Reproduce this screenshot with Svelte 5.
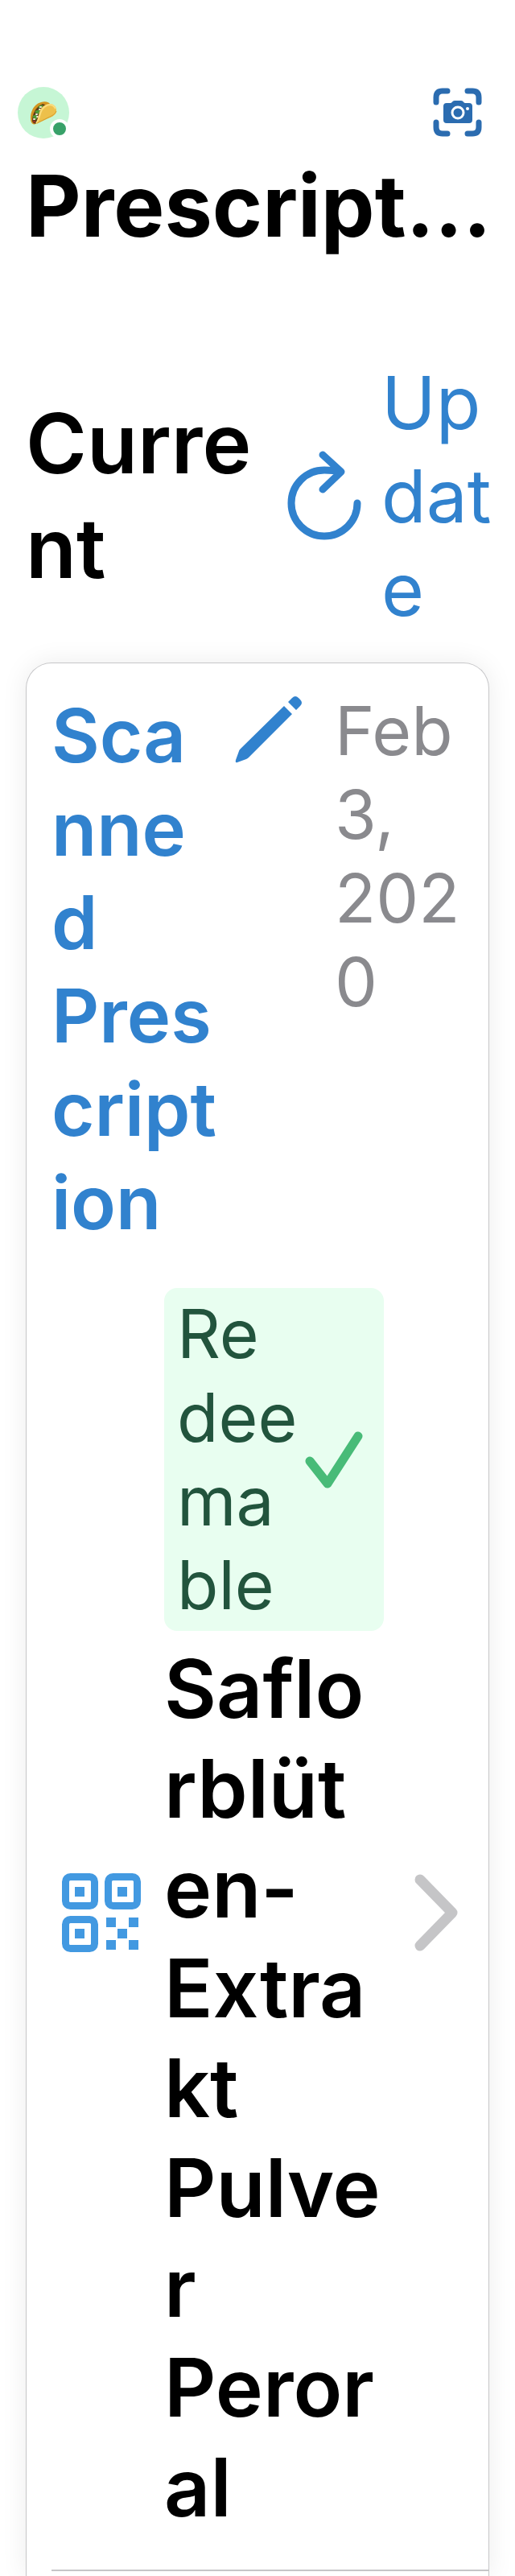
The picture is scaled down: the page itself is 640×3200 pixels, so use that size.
<script>
  const prescription = {
    name: 'Scanned Prescription',
    date: 'Feb 3, 2020',
    medicine: 'Saflorblüten-Extrakt Pulver Peroral',
  };
</script>

<main class="page">
  <header class="top">
    <div class="toolbar">
      <button class="avatar" aria-label="Profile">
        <svg width="36" height="32" viewBox="0 0 36 32" aria-hidden="true">
          <path d="M3 28C0 20 4 6 15 3c5-1.500 9-.5 11 2L12 26c-3 5-7 6-9 2Z" fill="#d3931f" />
          <path d="M4 26C4 18 8 9 17 5l5 2-11 20c-3 4-6 3-7-1Z" fill="#5b3a1b" />
          <path d="m6 21 3-1m0-5 3-1m1-5 3-1m-8 15 2-1m1-6 2-1" stroke="#4f9a35" stroke-width="3" stroke-linecap="round" />
          <path d="M6 24h1m2-6h1m3-6h1m-4 9h1m3-12h1" stroke="#f3e9d8" stroke-width="2" stroke-linecap="round" />
          <path d="M6 27h1m4-4h1" stroke="#a5301f" stroke-width="2" stroke-linecap="round" />
          <path d="M9 29C13 23 10 11 21 6c8-3 14 2 13 9-1 4-5 6-10 8L9 30Z" fill="#edc04b" />
          <path d="M9 29C15 22 12 12 22 7c5-2 9 0 11 4" fill="none" stroke="#f9dc7d" stroke-width="2" />
          <path d="m10 29 14-7c5-2 9-5 10-8" fill="none" stroke="#d29a2c" stroke-width="1" />
        </svg>
        <span class="online"></span>
      </button>
      <button class="scan" aria-label="Scan prescription">
        <svg width="62" height="62" viewBox="0 0 62 62" aria-hidden="true">
          <path
            d="M4 18v-6q0-8 8-8h6M43 4h6q8 0 8 8v6M57 43v6q0 8-8 8h-6M18 57h-6q-8 0-8-8v-6"
            fill="none" stroke="#2b6cb0" stroke-width="7" stroke-linecap="round"
          />
          <path
            d="M16 19h6c2 0 2-3 5-3h8c3 0 3 3 5 3h5q4 0 4 4v17q0 4-4 4H17q-4 0-4-4V23q0-4 4-4Z"
            fill="#2b6cb0"
          />
          <circle cx="31" cy="31" r="7" fill="#2b6cb0" stroke="#fff" stroke-width="3" />
          <circle cx="43" cy="26" r="2" fill="#fff" />
        </svg>
      </button>
    </div>
    <h1>Prescriptions</h1>
  </header>

  <section class="current">
    <div class="section-head">
      <h2>Current</h2>
      <button class="update">
        <svg width="94" height="112" viewBox="0 0 94 112" aria-hidden="true">
          <path
            d="M88 65A41 41 0 1 1 47 24Q59 24 67 26M45 5l23 21-23 22"
            fill="none" stroke="#3182ce" stroke-width="9" stroke-linecap="round" stroke-linejoin="round"
          />
        </svg>
        <span>Up<wbr />dat<wbr />e</span>
      </button>
    </div>

    <article class="card">
      <div class="card-head">
        <h3>{prescription.name}</h3>
        <button class="edit" aria-label="Rename prescription">
          <svg width="84" height="84" viewBox="0 0 84 84" aria-hidden="true">
            <path
              d="M61 13 71 23 17 77q-1 1-3 2L3 83q-3 1-2-3L5 69q0-1 2-3ZM66 8l5-5q4-4 8 0l2 2q4 4 0 8l-5 5Z"
              fill="#3182ce"
            />
          </svg>
        </button>
        <time datetime="2020-02-03">{prescription.date}</time>
      </div>

      <a class="item" href="#medicine">
        <svg class="qr" width="98" height="98" viewBox="0 0 98 98" aria-hidden="true">
          <g fill="none" stroke="#4299e1" stroke-width="9">
            <rect x="4.500" y="4.500" width="36" height="36" rx="6" />
            <rect x="57.500" y="4.500" width="36" height="36" rx="6" />
            <rect x="4.500" y="57.500" width="36" height="36" rx="6" />
          </g>
          <path
            d="M16 17h12v12H16ZM69 17h12v12H69ZM16 69h12v12H16ZM55 55h12v12H55ZM83 55h12v12H83ZM69 69h12v12H69ZM55 83h12v12H55ZM83 83h12v12H83Z"
            fill="#4299e1"
          />
        </svg>
        <div class="details">
          <div class="badge">
            <span>Re<wbr />dee<wbr />ma<wbr />ble</span>
            <svg width="72" height="70" viewBox="0 0 72 70" aria-hidden="true">
              <path
                d="m6 37 22 28L66 6"
                fill="none" stroke="#48bb78" stroke-width="11" stroke-linecap="round" stroke-linejoin="round"
              />
            </svg>
          </div>
          <p>{prescription.medicine}</p>
        </div>
        <svg class="chevron" width="54" height="94" viewBox="0 0 54 94" aria-hidden="true">
          <path
            d="m7 6 40 41L7 88"
            fill="none" stroke="#c5c5c7" stroke-width="13" stroke-linecap="round" stroke-linejoin="round"
          />
        </svg>
      </a>
    </article>
  </section>
</main>

<style>
  :global(body) {
    margin: 0;
    background: #fff;
  }

  .page {
    display: flex;
    flex-direction: column;
    height: 100vh;
    overflow: hidden;
    box-sizing: border-box;
    padding-top: 108px;
    font-family: Inter, "Liberation Sans", sans-serif;
    color: #000;
  }

  h1, h2, h3, p {
    margin: 0;
  }

  button {
    padding: 0;
    border: 0;
    background: none;
    font: inherit;
    color: inherit;
    cursor: pointer;
  }

  svg {
    display: block;
    flex: none;
    overflow: visible;
  }

  .toolbar {
    display: flex;
    justify-content: space-between;
    align-items: center;
    padding: 0 40px 0 22px;
  }

  .avatar {
    position: relative;
    display: grid;
    place-items: center;
    width: 64px;
    height: 64px;
    border-radius: 50%;
    background: #c6f6d5;
  }

  .online {
    position: absolute;
    right: 0;
    bottom: 0;
    width: 16px;
    height: 16px;
    border: 4px solid #fff;
    border-radius: 50%;
    background: #38a169;
  }

  h1 {
    padding: 0 16px 0 32px;
    font-size: 106px;
    line-height: 168px;
    font-weight: 700;
    white-space: nowrap;
    overflow: hidden;
    text-overflow: ellipsis;
  }

  .current {
    display: flex;
    flex: 1;
    flex-direction: column;
    padding: 102px 32px 0;
  }

  .section-head {
    display: flex;
    align-items: center;
    justify-content: space-between;
    margin: 0 -8px 33px 0;
  }

  h2 {
    width: 290px;
    font-size: 103px;
    line-height: 130px;
    font-weight: 600;
    overflow-wrap: anywhere;
  }

  .update {
    display: flex;
    align-items: center;
    gap: 24px;
    color: #3182ce;
    font-size: 91px;
    line-height: 116px;
    text-align: left;
  }

  .update span {
    width: 142px;
  }

  .card {
    flex: 1;
    border: 1px solid #c6c6c8;
    border-bottom: 0;
    border-radius: 32px 32px 0 0;
    box-shadow: 0 0 32px rgba(0, 0, 0, 0.08);
  }

  .card-head {
    display: flex;
    align-items: flex-start;
    padding: 32px 31px;
  }

  h3 {
    flex: 1;
    min-width: 0;
    color: #3182ce;
    font-size: 92px;
    line-height: 116px;
    font-weight: 600;
    overflow-wrap: anywhere;
  }

  .edit {
    padding: 8px 40px 0 16px;
  }

  time {
    width: 160px;
    color: #8a8a8e;
    font-size: 84px;
    line-height: 104px;
    overflow-wrap: anywhere;
  }

  .item {
    display: flex;
    align-items: center;
    margin-left: 31px;
    padding: 16px 38px 40px 13px;
    border-bottom: 2px solid #c6c6c8;
    color: inherit;
    text-decoration: none;
  }

  .details {
    flex: 1;
    min-width: 0;
    margin: 0 38px 0 29px;
  }

  .badge {
    display: flex;
    align-items: center;
    justify-content: space-between;
    margin-bottom: 10px;
    padding: 5px 26px 5px 16px;
    border-radius: 16px;
    background: #e8fef0;
    color: #22543d;
    font-size: 84px;
    line-height: 104px;
  }

  .badge span {
    flex: 1;
    min-width: 0;
  }

  p {
    font-size: 100px;
    line-height: 124px;
    font-weight: 600;
    overflow-wrap: anywhere;
  }
</style>
